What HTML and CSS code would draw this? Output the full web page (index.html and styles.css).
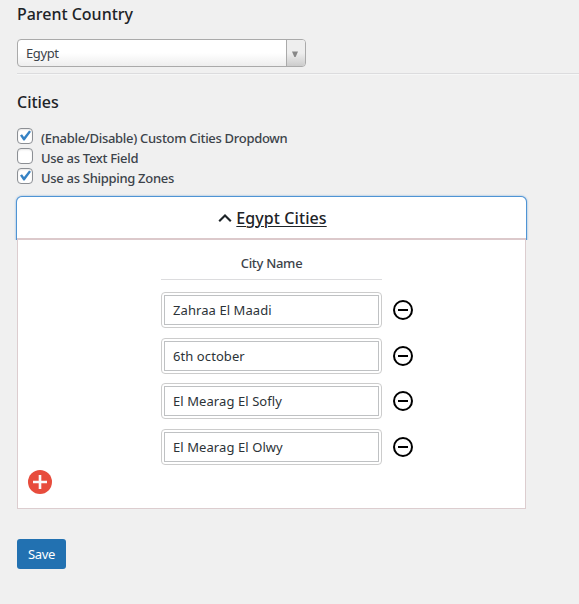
FILE: index.html
```html
<!DOCTYPE html>
<html lang="en">
<head>
<meta charset="utf-8">
<title>Cities</title>
<link rel="stylesheet" href="styles.css">
</head>
<body>
<main class="page">
  <h2 class="heading">Parent Country</h2>
  <div class="select">
    <span class="select-value">Egypt</span>
    <span class="select-arrow"><svg width="6" height="6" viewBox="0 0 6 6"><path d="M0 0.5h6L3.6 6H2.4z" fill="#888"/></svg></span>
  </div>
  <hr class="divider">
  <h2 class="heading heading-cities">Cities</h2>
  <div class="options">
    <label class="option"><span class="box"><svg width="14" height="14" viewBox="0 0 14 14"><path d="M2 6.4 4 5.3 6 8 11.1 1.5 13 2.8 6.6 11.6 5.4 11.6z" fill="#3582c4"/></svg></span><span class="option-text">(Enable/Disable) Custom Cities Dropdown</span></label>
    <label class="option"><span class="box"></span><span class="option-text">Use as Text Field</span></label>
    <label class="option"><span class="box"><svg width="14" height="14" viewBox="0 0 14 14"><path d="M2 6.4 4 5.3 6 8 11.1 1.5 13 2.8 6.6 11.6 5.4 11.6z" fill="#3582c4"/></svg></span><span class="option-text">Use as Shipping Zones</span></label>
  </div>
  <section class="accordion">
    <div class="accordion-head">
      <svg class="caret" width="14" height="10" viewBox="0 0 14 10"><path d="M1.2 8.2 7 2.4 12.8 8.2" fill="none" stroke="#1d2327" stroke-width="2.1"/></svg>
      <span class="accordion-title">Egypt Cities</span>
    </div>
    <div class="panel">
      <div class="column-title"><span>City Name</span></div>
      <div class="rows">
        <div class="row"><div class="field"><div class="input">Zahraa El Maadi</div></div><svg class="minus" width="20" height="20" viewBox="0 0 20 20"><circle cx="10" cy="10" r="9"/><path d="M5 10h10"/></svg></div>
        <div class="row"><div class="field"><div class="input">6th october</div></div><svg class="minus" width="20" height="20" viewBox="0 0 20 20"><circle cx="10" cy="10" r="9"/><path d="M5 10h10"/></svg></div>
        <div class="row"><div class="field"><div class="input">El Mearag El Sofly</div></div><svg class="minus" width="20" height="20" viewBox="0 0 20 20"><circle cx="10" cy="10" r="9"/><path d="M5 10h10"/></svg></div>
        <div class="row"><div class="field"><div class="input">El Mearag El Olwy</div></div><svg class="minus" width="20" height="20" viewBox="0 0 20 20"><circle cx="10" cy="10" r="9"/><path d="M5 10h10"/></svg></div>
      </div>
      <svg class="plus" width="24" height="24" viewBox="0 0 24 24"><circle cx="12" cy="12" r="12" fill="#e74c3c"/><path d="M12 5v14M5 12h14" stroke="#fafafa" stroke-width="2.6"/></svg>
    </div>
  </section>
  <button class="save" type="button">Save</button>
</main>
</body>
</html>
```
FILE: styles.css
```css
* { box-sizing: border-box; }
body {
  margin: 0;
  background: #f0f0f0;
  color: #3c434a;
  font: 13px/20px "Noto Sans", "Open Sans", sans-serif;
  overflow: hidden;
}
svg { display: block; flex: none; }
.page { height: 604px; padding: 2px 0 0 17px; }
.heading {
  margin: 0;
  color: #1d2327;
  font-size: 16px;
  font-weight: 500;
  line-height: 24px;
  letter-spacing: -0.02px;
}
.select {
  display: flex;
  width: 289px;
  height: 28px;
  margin-top: 13px;
  border: 1px solid #aaa;
  border-radius: 4px;
  background: linear-gradient(#fff 50%, #eee);
  overflow: hidden;
}
.select-value {
  flex: 1;
  padding-left: 8px;
  line-height: 27px;
  letter-spacing: -0.4px;
}
.select-arrow {
  display: flex;
  align-items: center;
  justify-content: center;
  width: 19px;
  padding-top: 2px;
  padding-right: 2px;
  border-left: 1px solid #aaa;
  background: linear-gradient(#eee 50%, #ccc);
}
.divider {
  height: 2px;
  margin: 6px 0 0;
  border: 0;
  border-top: 1px solid #dcdcde;
  border-bottom: 1px solid #f6f7f7;
}
.heading-cities { margin-top: 15px; }
.options { margin-top: 14px; }
.option { display: flex; height: 20px; }
.box {
  width: 16px;
  height: 16px;
  border: 1px solid #8c8f94;
  border-radius: 4px;
  background: #fff;
  box-shadow: inset 0 1px 2px rgba(0, 0, 0, .1);
}
.option-text {
  padding-left: 8px;
  font-weight: 550;
  line-height: 21px;
  letter-spacing: -0.3px;
}
.accordion { width: 509px; margin-top: 9px; }
.accordion-head {
  display: flex;
  align-items: center;
  justify-content: center;
  gap: 4px;
  height: 43px;
  padding-left: 2px;
  border-bottom: 2px solid #dcc9cb;
  border-radius: 5px 5px 0 0;
  background: #fff;
  box-shadow: 0 0 0 1px #4f94d4, 0 0 2px 1px rgba(79, 148, 212, .8);
  clip-path: inset(-3px -3px 0 -3px);
}
.accordion-title {
  color: #1d2327;
  font-size: 16px;
  font-weight: 500;
  letter-spacing: 0.08px;
  text-decoration: underline;
  text-decoration-thickness: 1px;
  text-underline-offset: 2px;
}
.panel {
  display: flex;
  flex-direction: column;
  height: 269px;
  padding: 10px 10px 0;
  border: 1px solid #dccdcf;
  border-top: 0;
  background: #fff;
}
.column-title {
  width: 221px;
  height: 30px;
  margin-left: 133px;
  border-bottom: 1px solid #dcdcde;
  font-weight: 500;
  line-height: 27px;
  letter-spacing: -0.3px;
  text-align: center;
}
.rows {
  display: grid;
  grid-template-rows: repeat(4, 45.67px);
  margin: 12px 0 0 133px;
}
.row { display: flex; align-items: flex-start; gap: 11px; }
.field {
  width: 221px;
  height: 36px;
  padding: 2px;
  border: 1px solid #ccc;
  border-radius: 4px;
}
.input {
  height: 30px;
  padding-left: 8px;
  border: 1px solid #bfc1c3;
  color: #2c3338;
  line-height: 28px;
  letter-spacing: 0.08px;
}
.minus { margin-top: 8px; fill: none; stroke: #000; stroke-width: 2; }
.plus { margin-top: -5px; }
.save {
  display: block;
  width: 49px;
  height: 30px;
  margin-top: 30px;
  padding: 0;
  border: 0;
  border-radius: 3px;
  background: #2271b1;
  color: #fff;
  font: 13px/30px "Noto Sans", sans-serif;
  letter-spacing: -0.4px;
}
```
